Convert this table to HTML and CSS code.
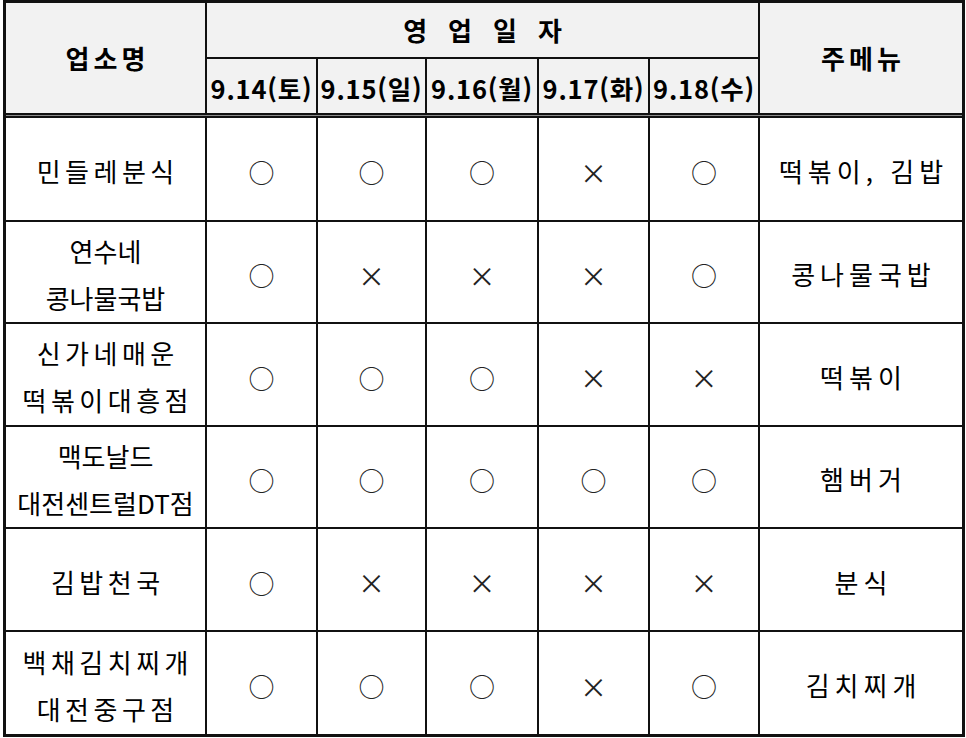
FILE: index.html
```html
<!DOCTYPE html>
<html lang="ko">
<head>
<meta charset="utf-8">
<title>영업일자</title>
<link rel="stylesheet" href="styles.css">
</head>
<body>
<div class="frame">
  <div class="grid">
    <div class="cell head name-h"><span class="hd sp4">업소명</span></div>
    <div class="cell head days-h"><span class="hd wide">영업일자</span></div>
    <div class="cell head menu-h"><span class="hd sp4">주메뉴</span></div>
    <div class="cell head date">9.14(토)</div>
    <div class="cell head date">9.15(일)</div>
    <div class="cell head date">9.16(월)</div>
    <div class="cell head date">9.17(화)</div>
    <div class="cell head date">9.18(수)</div>
    <div class="sep"></div>

    <div class="cell txt"><span class="sp">민들레분식</span></div>
    <div class="cell mk o">○</div><div class="cell mk o">○</div><div class="cell mk o">○</div><div class="cell mk x">×</div><div class="cell mk o">○</div>
    <div class="cell txt"><span class="spm">떡볶이, 김밥</span></div>

    <div class="cell txt two"><span>연수네</span><span>콩나물국밥</span></div>
    <div class="cell mk o">○</div><div class="cell mk x">×</div><div class="cell mk x">×</div><div class="cell mk x">×</div><div class="cell mk o">○</div>
    <div class="cell txt"><span class="spm">콩나물국밥</span></div>

    <div class="cell txt two"><span class="sp">신가네매운</span><span class="sp">떡볶이대흥점</span></div>
    <div class="cell mk o">○</div><div class="cell mk o">○</div><div class="cell mk o">○</div><div class="cell mk x">×</div><div class="cell mk x">×</div>
    <div class="cell txt"><span class="spm">떡볶이</span></div>

    <div class="cell txt two"><span>맥도날드</span><span>대전센트럴DT점</span></div>
    <div class="cell mk o">○</div><div class="cell mk o">○</div><div class="cell mk o">○</div><div class="cell mk o">○</div><div class="cell mk o">○</div>
    <div class="cell txt"><span class="spm">햄버거</span></div>

    <div class="cell txt"><span class="sp">김밥천국</span></div>
    <div class="cell mk o">○</div><div class="cell mk x">×</div><div class="cell mk x">×</div><div class="cell mk x">×</div><div class="cell mk x">×</div>
    <div class="cell txt"><span class="spm">분식</span></div>

    <div class="cell txt two"><span class="sp">백채김치찌개</span><span class="sp">대전중구점</span></div>
    <div class="cell mk o">○</div><div class="cell mk o">○</div><div class="cell mk o">○</div><div class="cell mk x">×</div><div class="cell mk o">○</div>
    <div class="cell txt"><span class="spm">김치찌개</span></div>
  </div>
</div>
</body>
</html>
```
FILE: styles.css
```css
html, body {
  margin: 0;
  padding: 0;
  background: #ffffff;
}
body {
  font-family: "Noto Sans CJK KR", "Noto Sans", sans-serif;
  color: #000;
}
.frame {
  margin-left: 3px;
  width: 956px;
  border: 3px solid #111;
  background: #111;
}
.grid {
  display: grid;
  grid-template-columns: 199px 109px 107px 110px 109px 108px 202px;
  grid-template-rows: 54px 54px 1px 102px 100px 101px 100px 101px 102px;
  gap: 2px;
  background: #111;
}
.cell {
  display: flex;
  align-items: center;
  justify-content: center;
  background: #fff;
  overflow: hidden;
}
.head {
  background: #f2f2f2;
  font-weight: 700;
}
.name-h { grid-column: 1; grid-row: 1 / span 2; }
.days-h { grid-column: 2 / span 5; grid-row: 1; }
.menu-h { grid-column: 7; grid-row: 1 / span 2; }
.sep {
  grid-column: 1 / -1;
  background: #8a8a8a;
}
.hd {
  font-size: 26px;
  line-height: 1;
}
.sp4 {
  letter-spacing: 4px;
  padding-left: 4px;
}
.wide {
  letter-spacing: 21px;
  padding-left: 21px;
}
.date {
  font-size: 25.5px;
  letter-spacing: 0.8px;
  line-height: 1;
  padding-top: 4px;
  white-space: nowrap;
}
.txt {
  font-size: 26px;
  line-height: 1;
  flex-direction: column;
  white-space: nowrap;
  padding-top: 4px;
}
.txt.two {
  gap: 21px;
}
.sp {
  letter-spacing: 4.5px;
  padding-left: 4.5px;
}
.spm {
  letter-spacing: 5px;
  padding-left: 5px;
}
.mk {
  font-size: 26px;
  line-height: 1;
  color: #222;
  padding-top: 6px;
}
.mk.x {
  font-size: 27px;
}
```
